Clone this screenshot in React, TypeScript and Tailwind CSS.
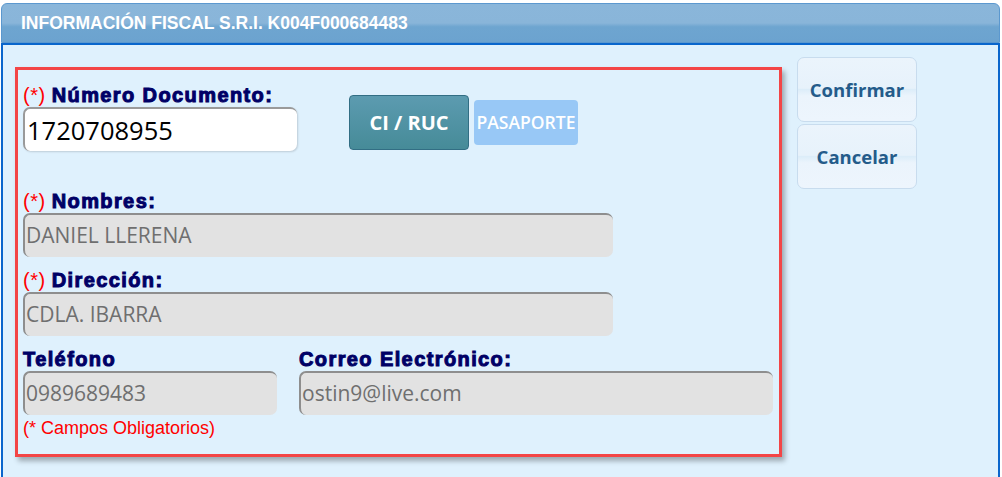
const LBL =
  "font-['Liberation_Sans',Arial,sans-serif] font-bold text-[20px] tracking-[1.4px] leading-[20px] text-[#000066] [-webkit-text-stroke:1px_#000066]"
const REQ = "font-normal tracking-[0.5px] text-[#ff0000] [-webkit-text-stroke:0px]"
const INP =
  "font-['Open_Sans',sans-serif] rounded-[7px] bg-[#e2e2e2] border-t-2 border-l-2 border-[#8e8e8e] text-[21px] text-[#6f6f6f] px-[1px] flex items-center h-[44px]"

function Field({ label, req, value, w }: { label: string; req?: boolean; value: string; w: string }) {
  return (
    <div>
      <div className={LBL}>
        {req && <span className={REQ}>(*) </span>}
        {label}
      </div>
      <div className={`${INP} ${w} mt-[2px]`}>{value}</div>
    </div>
  )
}

export default function App() {
  return (
    <div className="w-[1002px] h-[477px] bg-white pt-[3px] pl-[1px] pr-[2px] overflow-hidden">
      <div className="h-[40px] rounded-t-[6px] border border-[#5b98cf] bg-[linear-gradient(#8ab6da_0%,#89b5d9_50%,#6ea5d0_60%,#6ca3cf_100%)] flex items-center pl-[19px]">
        <span className="font-['Liberation_Sans',Arial,sans-serif] font-bold text-[17.5px] text-white">
          INFORMACIÓN FISCAL S.R.I. K004F000684483
        </span>
      </div>
      <div className="h-[440px] bg-[#dff1fd] border-t-[2px] border-x-[2px] border-[#0a66cc] flex pl-[12px] pt-[12px]">
        <div className="mt-[10px] w-[767px] h-[390px] border-[3px] border-[#f34546] shadow-[3px_4px_5px_rgba(0,0,0,0.3)] pl-[5px] pt-[15px]">
          <div className="flex">
            <div>
              <div className={LBL}>
                <span className={REQ}>(*) </span>Número Documento:
              </div>
              <div className="mt-[2px] w-[274px] h-[44px] rounded-[7px] bg-white border-t-2 border-l-2 border-[#9a9a9a] shadow-[1px_1px_2px_rgba(0,0,0,0.15)] flex items-center px-[2px] font-['Open_Sans',sans-serif] text-[25.5px] text-black">
                1720708955
              </div>
            </div>
            <div className="flex items-center ml-[52px] mt-[10px] gap-[5px] h-[55px] font-['Open_Sans',sans-serif] text-white">
              <div className="w-[120px] h-[55px] rounded-[4px] border border-[#326e84] bg-[linear-gradient(#5c9bb0,#468b98)] flex items-center justify-center font-bold text-[20px]">
                CI / RUC
              </div>
              <div className="w-[104px] h-[45px] rounded-[4px] bg-[#98c8f6] flex items-center justify-center font-semibold text-[17.5px]">
                PASAPORTE
              </div>
            </div>
          </div>
          <div className="mt-[40px] flex flex-col gap-[13px]">
            <Field label="Nombres:" req value="DANIEL LLERENA" w="w-[590px]" />
            <Field label="Dirección:" req value="CDLA. IBARRA" w="w-[590px]" />
            <div className="flex gap-[22px]">
              <Field label="Teléfono" value="0989689483" w="w-[254px]" />
              <Field label="Correo Electrónico:" value="ostin9@live.com" w="w-[474px]" />
            </div>
          </div>
          <div className="mt-[1px] font-['Liberation_Sans',Arial,sans-serif] text-[18px] leading-[24px] text-[#ff0000]">(* Campos Obligatorios)</div>
        </div>
        <div className="ml-[15px] flex flex-col gap-[2px] font-['Open_Sans',sans-serif] font-bold text-[18.5px] text-[#245b8a]">
          {['Confirmar', 'Cancelar'].map((t) => (
            <div
              key={t}
              className="w-[120px] h-[65px] rounded-[7px] border border-[#c8dcee] bg-[linear-gradient(#ebf4fc_0%,#e7f2fb_48%,#dcedf9_50%,#ebf4fc_60%,#edf5fd_100%)] flex items-center justify-center"
            >
              {t}
            </div>
          ))}
        </div>
      </div>
    </div>
  )
}
